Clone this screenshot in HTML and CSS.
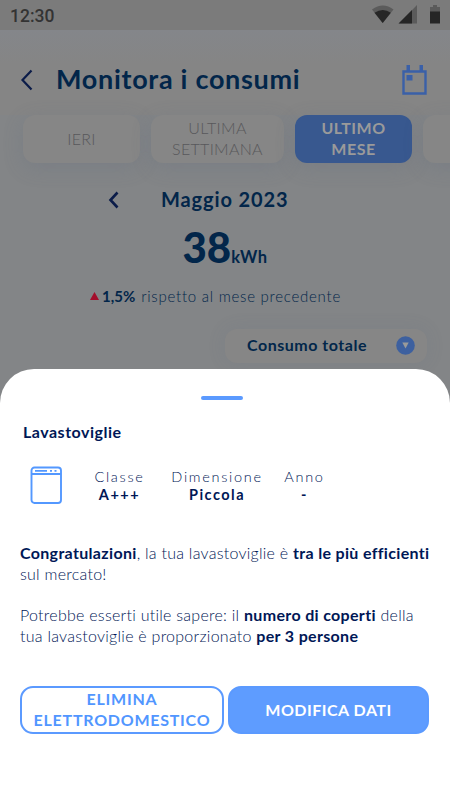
FILE: index.html
```html
<!DOCTYPE html>
<html lang="it">
<head>
    <meta charset="UTF-8">
    <meta name="viewport" content="width=device-width, initial-scale=1.0">
    <title>Monitora i consumi</title>
    <link rel="stylesheet" href="styles.css">
</head>
<body>
    <div class="phone">
        <div class="statusbar">
            <span class="clock">12:30</span>
            <svg class="status-icons" width="70" height="20" viewBox="0 0 70 20">
                <path d="M0 4.500Q11-3.500 21.500 4.500L10.700 18Z" fill="#5b5b5b"/>
                <path d="M2.500 7.700Q11 2.500 18.800 7.700L10.700 18Z" fill="#262626"/>
                <path d="M45 0V18.500H27Z" fill="#5b5b5b"/>
                <path d="M40 5V18.500H26.500Z" fill="#262626"/>
                <path d="M58 2H61V0H65V2H68V7H58Z" fill="#5b5b5b"/>
                <path d="M58 6.500H68V18.500H58Z" fill="#262626"/>
            </svg>
        </div>

        <div class="header">
            <svg class="back" width="14" height="22" viewBox="0 0 14 22">
                <path d="M11.500 1.500L2.500 11L11.500 20.500" fill="none" stroke="#0b1c49" stroke-width="2.200"/>
            </svg>
            <h1>Monitora i consumi</h1>
            <svg class="calendar" width="26" height="30" viewBox="0 0 26 30">
                <path d="M1.500 6.500H23.500V28.500H1.500Z" fill="none" stroke="#3a60a8" stroke-width="2.400"/>
                <path d="M4.500 0H8V6H4.500ZM17.500 0H21V6H17.500ZM4.500 10H10.500V15.500H4.500Z" fill="#3a60a8"/>
            </svg>
        </div>

        <div class="tabs">
            <div class="tab tab-small">IERI</div>
            <div class="tab">ULTIMA<br>SETTIMANA</div>
            <div class="tab tab-small active">ULTIMO<br>MESE</div>
            <div class="tab"></div>
        </div>

        <div class="month">
            <svg class="prev" width="12" height="18" viewBox="0 0 12 18">
                <path d="M9.500 1.500L2.500 9L9.500 16.500" fill="none" stroke="#0b1c49" stroke-width="2.600"/>
            </svg>
            <span class="month-name">Maggio 2023</span>
        </div>

        <div class="total"><span class="value">38</span><span class="unit">kWh</span></div>

        <div class="trend">
            <svg width="9" height="8" viewBox="0 0 9 8"><path d="M4.500 0L9 8H0Z" fill="#a30f2c"/></svg>
            <b>1,5%</b>
            <span>rispetto al mese precedente</span>
        </div>

        <div class="filter">
            <span>Consumo totale</span>
            <svg width="19" height="19" viewBox="0 0 19 19">
                <circle cx="9.500" cy="9.500" r="9.300" fill="#3d609f"/>
                <path d="M6.300 6.500H12.700L9.500 12.500Z" fill="#9a9a9a"/>
            </svg>
        </div>

        <div class="sheet">
            <div class="handle"></div>
            <h2>Lavastoviglie</h2>

            <div class="details">
                <svg class="appliance" width="32" height="38" viewBox="0 0 32 38">
                    <rect x="1.500" y="1.500" width="29.500" height="35.500" rx="3" fill="none" stroke="#5398ff" stroke-width="1.900"/>
                    <path d="M1.500 8H31" stroke="#5398ff" stroke-width="2"/>
                    <path d="M5 4.800H17M20 4.800H22M24.500 4.800H26.500" stroke="#5398ff" stroke-width="1.700"/>
                </svg>
                <div class="detail classe">Classe<b>A+++</b></div>
                <div class="detail dimensione">Dimensione<b>Piccola</b></div>
                <div class="detail anno">Anno<b>-</b></div>
            </div>

            <div class="message">
                <p><b>Congratulazioni</b>, la tua lavastoviglie è <b>tra le più efficienti</b><br>sul mercato!</p>
                <p>Potrebbe esserti utile sapere: il <b>numero di coperti</b> della<br>tua lavastoviglie è proporzionato <b>per 3 persone</b></p>
            </div>

            <div class="buttons">
                <button class="btn btn-outline">ELIMINA<br>ELETTRODOMESTICO</button>
                <button class="btn btn-full">MODIFICA DATI</button>
            </div>
        </div>
    </div>
</body>
</html>
```
FILE: styles.css
```css
/* general styling */
* {
    box-sizing: border-box;
    margin: 0;
    padding: 0;
}

body {
    width: 450px;
    height: 800px;
    overflow: hidden;
    background-color: #838587;
    font-family: Lato, "Open Sans", sans-serif;
    color: #02264a;
}

svg {
    display: block;
    flex: none;
}

b {
    font-weight: 700;
}

.phone {
    width: 450px;
    height: 800px;
    overflow: hidden;
    display: flex;
    flex-direction: column;
    white-space: nowrap;
}

.statusbar {
    height: 30px;
    flex: none;
    display: flex;
    justify-content: space-between;
    padding: 5px 8px 0 10px;
    background-color: #7b7b7b;
}

.clock {
    font: 500 17.500px/23px Roboto, sans-serif;
    color: #333;
}

/* header */
.header {
    height: 85px;
    flex: none;
    display: flex;
    align-items: flex-start;
    padding: 34px 22px 0 20px;
    background: linear-gradient(#84868a, #858585 40%);
}

.back {
    margin-top: 5px;
}

h1 {
    margin-left: 22px;
    font-size: 27px;
    line-height: 30px;
    letter-spacing: 0.7px;
}

.calendar {
    margin: 1px 0 0 auto;
}

/* period tabs */
.tabs {
    height: 48px;
    flex: none;
    display: flex;
    gap: 11px;
    padding-left: 23px;
}

.tab {
    width: 133px;
    flex: none;
    display: flex;
    align-items: center;
    justify-content: center;
    padding-bottom: 2px;
    text-align: center;
    border-radius: 12px;
    background-color: #868686;
    box-shadow: 0 5px 20px rgba(90, 105, 125, .24);
    color: #58585b;
    font-size: 16px;
    font-weight: 300;
    line-height: 21px;
    letter-spacing: 0.3px;
}

.tab-small {
    width: 117px;
}

.active {
    background-color: #38588f;
    color: #9a9a9a;
    font-weight: bold;
    letter-spacing: 0.5px;
}

/* consumption */
.month {
    height: 62px;
    flex: none;
    display: flex;
    align-items: center;
    padding: 12px 0 0 108px;
}

.month-name {
    margin-left: 41px;
    padding-bottom: 2px;
    font-size: 20px;
    font-weight: bold;
    letter-spacing: 0.9px;
}

.total {
    height: 48px;
    flex: none;
    display: flex;
    align-items: baseline;
    justify-content: center;
}

.value {
    font-size: 42px;
    line-height: 44px;
    font-weight: 900;
}

.unit {
    font-size: 16.500px;
    font-weight: bold;
    letter-spacing: 0.5px;
}

.trend {
    height: 56px;
    flex: none;
    display: flex;
    align-items: center;
    padding: 0 0 10px 90px;
    font-size: 15px;
    font-weight: 300;
    letter-spacing: 0.75px;
}

.trend b {
    margin: 0 6px 0 3px;
    letter-spacing: 0;
}

.filter {
    width: 202px;
    height: 34px;
    flex: none;
    display: flex;
    align-items: center;
    justify-content: space-between;
    margin-left: 225px;
    padding: 0 12px 1px 22px;
    border-radius: 12px;
    background-color: #868686;
    box-shadow: 0 0 18px rgba(90, 105, 125, .14);
    font-size: 16px;
    font-weight: bold;
    letter-spacing: 0.52px;
}

.filter span {
    padding-bottom: 2px;
}

/* bottom sheet */
.sheet {
    height: 431px;
    flex: none;
    margin-top: 6px;
    padding: 26px 21px 0 20px;
    border-radius: 34px 34px 0 0;
    background-color: #fff;
    color: #001756;
}

.handle {
    width: 42px;
    height: 4px;
    margin: 1px 0 0 181px;
    border-radius: 2px;
    background-color: #5b9aff;
}

h2 {
    margin: 20px 0 0 3px;
    font-size: 16px;
    line-height: 24px;
    letter-spacing: 0.5px;
}

.details {
    height: 97px;
    display: flex;
    padding: 22px 0 0 10px;
}

.detail {
    padding-top: 2px;
    font-size: 14.500px;
    font-weight: 300;
    line-height: 18px;
    letter-spacing: 1.7px;
    text-align: center;
}

.detail b {
    display: block;
    letter-spacing: 1.5px;
}

.classe {
    width: 53px;
    margin-left: 31px;
}

.dimensione {
    width: 92px;
    margin-left: 25px;
}

.anno {
    width: 41px;
    margin-left: 21px;
}

.message {
    height: 145px;
    padding-top: 1px;
    font-size: 16px;
    font-weight: 300;
    line-height: 21px;
    letter-spacing: 0.26px;
}

.message p {
    margin-bottom: 20px;
}

.message b {
    letter-spacing: 0.33px;
}

.buttons {
    display: flex;
    gap: 4px;
}

.btn {
    height: 48px;
    padding-bottom: 2px;
    border: 2px solid #5b9aff;
    border-radius: 13px;
    font-family: inherit;
    font-size: 16px;
    line-height: 21px;
    font-weight: bold;
    letter-spacing: 0.75px;
}

.btn-outline {
    width: 204px;
    background-color: #fff;
    color: #5196ff;
}

.btn-full {
    width: 201px;
    background-color: #5e9cff;
    color: #fff;
    letter-spacing: 0.5px;
}
```
